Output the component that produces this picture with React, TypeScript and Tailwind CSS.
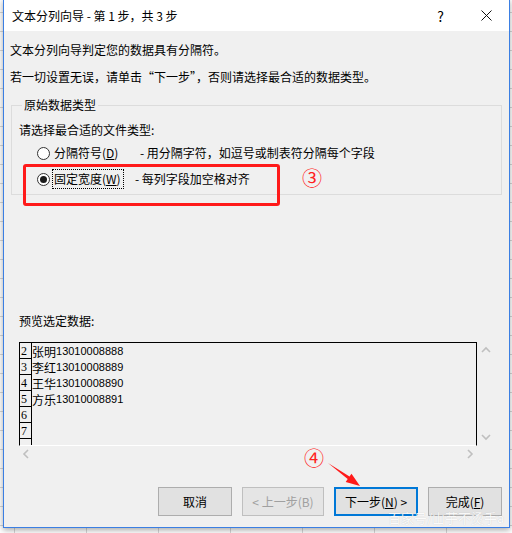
const cjk = "font-['Microsoft_YaHei','Noto_Sans_CJK_SC',sans-serif]";

function Radio({ checked }: { checked?: boolean }) {
  return (
    <span className="flex h-[13px] w-[13px] items-center justify-center rounded-full border border-[#333333] bg-white">
      {checked && <span className="h-[7px] w-[7px] rounded-full bg-[#1a1a1a]" />}
    </span>
  );
}

function Chevron({ dir }: { dir: 'up' | 'down' | 'left' | 'right' }) {
  const d = {
    up: 'M2 7 L6 3 L10 7',
    down: 'M2 4 L6 8 L10 4',
    left: 'M7 2 L3 6 L7 10',
    right: 'M5 2 L9 6 L5 10',
  }[dir];
  return (
    <svg width="12" height="12" viewBox="0 0 12 12" fill="none">
      <path d={d} stroke="#bfbfbf" strokeWidth="1.6" />
    </svg>
  );
}

const rows = [
  { n: '2', name: '张明', tel: '13010008888' },
  { n: '3', name: '李红', tel: '13010008889' },
  { n: '4', name: '王华', tel: '13010008890' },
  { n: '5', name: '方乐', tel: '13010008891' },
  { n: '6', name: '', tel: '' },
  { n: '7', name: '', tel: '' },
  { n: '', name: '', tel: '' },
];

export default function App() {
  return (
    <div className={`relative h-[533px] w-[512px] overflow-hidden bg-white [background-image:linear-gradient(#d6d6d6_1px,transparent_1px),linear-gradient(90deg,#d6d6d6_1px,transparent_1px)] [background-size:72px_19px] [background-position:14px_12px] ${cjk} text-[12px] text-black`}>
      {/* dialog window */}
      <div className="absolute left-[3px] top-[-1px] flex h-[529px] w-[507px] flex-col border border-[#3b7fe3] bg-[#f0f0f0] shadow-[0_2px_6px_rgba(0,0,0,0.35)]">
        <div className="flex h-[31px] items-center bg-white pl-[8px]">
          <span className="leading-[18px]">文本分列向导 - 第 1 步，共 3 步</span>
          <span className="ml-auto mr-[37px] text-[14px] leading-none">?</span>
          <svg width="11" height="11" viewBox="0 0 11 11" className="mr-[17px]">
            <path d="M0.5 0.5 L10.5 10.5 M10.5 0.5 L0.5 10.5" stroke="#111" strokeWidth="1" />
          </svg>
        </div>

        <div className="flex flex-1 flex-col">
          <p className="mt-[10px] pl-[6px] leading-[18px]">文本分列向导判定您的数据具有分隔符。</p>
          <p className="mt-[9px] pl-[6px] leading-[18px]">若一切设置无误，请单击“下一步”，否则请选择最合适的数据类型。</p>

          <fieldset className="mx-[7px] mt-[10px] border border-[#dcdcdc] pb-[5px] pl-[7px]">
            <legend className="ml-[3px] px-[2px] leading-[18px]">原始数据类型</legend>
            <p className="mt-[7px] leading-[18px]">请选择最合适的文件类型:</p>
            <div className="mt-[4px] flex h-[20px] items-center pl-[18px]">
              <Radio />
              <span className="ml-[3px] w-[87px] px-[1px] leading-[18px]">分隔符号(<span className="underline">D</span>)</span>
              <span className="leading-[18px]">- 用分隔字符，如逗号或制表符分隔每个字段</span>
            </div>
            <div className="mt-[6px] flex h-[20px] items-center pl-[18px]">
              <Radio checked />
              <span className="ml-[2px] flex h-[20px] w-[72px] items-center border border-dotted border-black px-[1px] leading-[18px]">固定宽度(<span className="underline">W</span>)</span>
              <span className="ml-[11px] leading-[18px]">- 每列字段加空格对齐</span>
            </div>
          </fieldset>

          <p className="mt-[117px] pl-[15px] leading-[18px]">预览选定数据:</p>

          <div className="ml-[15px] mt-[12px] flex w-[475px]">
            <div className="flex w-[458px] flex-col">
              <div className="h-[104px] overflow-hidden border-x border-t border-b border-black border-b-white bg-[#f0f0f0]">
                {rows.map((r, i) => (
                  <div key={i} className="flex h-[16px]">
                    <span className="flex w-[12px] items-end border-b border-r border-black pl-[1px] font-['Liberation_Serif',serif] text-[12px] leading-[13px]">
                      {r.n}
                    </span>
                    <span className="flex items-end leading-[15px]">
                      <span className="text-[12px]">{r.name}</span>
                      <span className="font-['Liberation_Sans',sans-serif] text-[11px]">{r.tel}</span>
                    </span>
                  </div>
                ))}
              </div>
              <div className="flex h-[16px] items-center justify-between px-[2px]">
                <Chevron dir="left" />
                <Chevron dir="right" />
              </div>
            </div>
            <div className="flex h-[104px] w-[17px] flex-col items-center justify-between py-[3px]">
              <Chevron dir="up" />
              <Chevron dir="down" />
            </div>
          </div>

          <div className="mt-[25px] flex gap-[10px] pl-[154px]">
            <button className="flex h-[29px] w-[74px] items-center justify-center border border-[#adadad] bg-[#e1e1e1]">取消</button>
            <button className="flex h-[29px] w-[82px] items-center justify-center border border-[#bfbfbf] bg-[#e5e5e5] text-[#a0a0a0]">
              &lt; 上一步(B)
            </button>
            <button className="flex h-[29px] w-[84px] items-center justify-center border-2 border-[#0078d7] bg-[#e1e1e1]">
              下一步(<span className="underline">N</span>) &gt;
            </button>
            <button className="flex h-[29px] w-[74px] items-center justify-center border border-[#adadad] bg-[#e1e1e1]">
              完成(<span className="underline">F</span>)
            </button>
          </div>
        </div>
      </div>

      {/* annotations */}
      <div className="absolute left-[23px] top-[164px] h-[42px] w-[257px] rounded-[3px] border-[3px] border-[#ff1a1a]" />
      <span className="absolute left-[302px] top-[166px] text-[20px] leading-[24px] text-[#ff2020]">③</span>
      <span className="absolute left-[304px] top-[446px] text-[20px] leading-[24px] text-[#ff2020]">④</span>
      <svg className="absolute left-0 top-0" width="512" height="533">
        <polygon points="328,463 349.5,476.6 351.5,473.7 360,486 345.7,481.9 347.7,479.0" fill="#ff1a1a" />
      </svg>
      <span className="absolute left-[388px] top-[510px] text-[13px] leading-[16px] text-white/90 [text-shadow:0_0_1px_rgba(0,0,0,0.2)]">百家号/山芋不烫手a</span>
    </div>
  );
}
